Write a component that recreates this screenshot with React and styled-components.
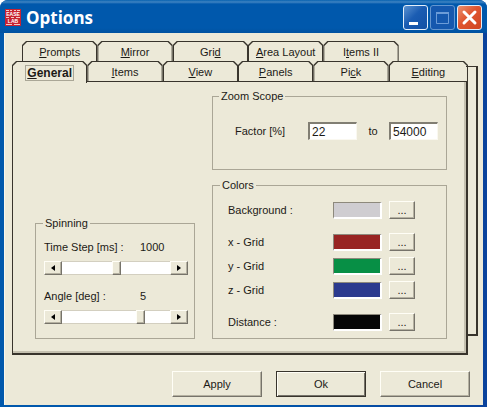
import React, { useState } from "react";
import styled, { createGlobalStyle, css } from "styled-components";

const face = "#ece9d8";
const ink = "#38342c";
const shade = "#aaa696";

const GlobalStyle = createGlobalStyle`
  * { box-sizing: border-box; }
  body { margin: 0; background: #fff; }
  button, input { font: inherit; color: inherit; }
`;

const Window = styled.main`
  display: flex;
  flex-direction: column;
  min-height: 100vh;
  padding: 0 4px 3px;
  border-radius: 8px 8px 0 0;
  background: linear-gradient(90deg, #0058ac 0, #0058ac 50%, #0a429c 100%);
  color: #1c1a16;
  font: 11px/14px "Liberation Sans", Arial, sans-serif;
  overflow: hidden;
`;

const TitleBar = styled.header`
  display: flex;
  align-items: center;
  gap: 5px;
  height: 33px;
  margin: 0 -4px;
  padding: 2px 5px 0;
  background: linear-gradient(#0862b0 0, #3f83c2 2px, #0058ac 4px, #0058ac 28px, #0052a0 100%);
`;

const Title = styled.h1`
  flex: 1;
  margin: 0;
  color: #fff;
  font: bold 17px/24px "Open Sans", "Noto Sans", sans-serif;
`;

const WindowButtons = styled.div`
  display: flex;
  gap: 2px;
`;

const WindowButton = styled.button`
  width: 25px;
  height: 25px;
  padding: 0;
  border: 1px solid ${(p) => (p.$faded ? "#6496d0" : "#e4effa")};
  border-radius: 3px;
  background: ${(p) =>
    p.$close
      ? "linear-gradient(135deg, #e9906f, #e0552f 45%, #cf4521)"
      : p.$faded
        ? "#1558ae"
        : "linear-gradient(135deg, #5c93d0, #1a5cb2 45%, #1251a5)"};
  svg { display: block; }
`;

const Body = styled.div`
  flex: 1;
  display: flex;
  flex-direction: column;
  padding: 8px 5px 8px 7px;
  border-left: 1px solid #f8f6ec;
  background: ${face};
`;

const TabRow = styled.div`
  position: relative;
  display: grid;
  grid-template-columns: repeat(5, 75fr) 79fr;
  height: 20px;
  margin: ${(p) => (p.$back ? "0 0 0 10px" : "0 10px 0 0")};
`;

const chamfer = "polygon(0 4px, 4px 0, calc(100% - 4px) 0, 100% 4px, 100% 100%, 0 100%)";

const Tab = styled.button`
  position: relative;
  height: 20px;
  padding: 1px 0 0;
  border: 0;
  background: ${ink};
  clip-path: ${chamfer};
  &::before {
    content: "";
    position: absolute;
    inset: 1px 1px 0;
    background: ${face};
    clip-path: ${chamfer};
  }
  ${(p) =>
    p.$selected &&
    css`
      z-index: 1;
      height: 22px;
      padding: 1px 0 0;
      font-size: 12px;
      font-weight: bold;
    `}
`;

const TabText = styled.span`
  position: relative;
  display: inline-block;
  padding: 0 1px;
  outline: ${(p) => (p.$focus ? "1px solid #aaa797" : "none")};
`;

const Sheets = styled.div`
  position: relative;
  flex: 1;
  display: flex;
  padding-right: 10px;
  &::before {
    content: "";
    position: absolute;
    inset: -15px 0 19px auto;
    width: 10px;
    border: 1px solid ${ink};
    border-width: 1px 2px 2px 0;
  }
`;

const Panel = styled.section`
  position: relative;
  flex: 1;
  display: grid;
  grid-template-columns: 160fr 233fr;
  column-gap: 17px;
  padding: 7px 19px 14px 22px;
  border: 1px solid ${ink};
  border-width: 1px 2px 2px 1px;
  background: ${face};
  box-shadow: inset -2px -2px 0 #c5c1b0;
`;

const Column = styled.div`
  display: flex;
  flex-direction: column;
  justify-content: flex-end;
  gap: 8px;
`;

const Group = styled.fieldset`
  min-width: 0;
  margin: 0;
  padding: ${(p) => p.$pad};
  border: 1px solid ${shade};
`;

const Legend = styled.legend`
  margin-left: ${(p) => p.$indent}px;
  padding: 0 2px;
`;

const ZoomRow = styled.div`
  display: flex;
  align-items: center;
`;

const ZoomLabel = styled.label`
  width: 73px;
`;

const To = styled.label`
  width: 32px;
  text-align: center;
`;

const NumberBox = styled.input`
  width: 49px;
  height: 18px;
  padding: 0 2px;
  border: 1px solid;
  border-width: 2px 1px 1px 2px;
  border-color: #817e73 #faf8f0 #faf8f0 #817e73;
  border-radius: 0;
  background: #fff;
  font-size: 12px;
  outline: 0;
`;

const ColorRow = styled.div`
  display: grid;
  grid-template-columns: 1fr 49px 26px;
  align-items: center;
  column-gap: 7px;
  height: 18px;
  margin-bottom: ${(p) => (p.$spaced ? 14 : 6)}px;
  &:last-child { margin-bottom: 0; }
`;

const Swatch = styled.span`
  height: 17px;
  border: 1px solid;
  border-color: #8d897c #fff #fff #8d897c;
  border-bottom-width: 2px;
  border-right-width: 2px;
  background: ${(p) => p.$color};
`;

const raised = css`
  border: 1px solid;
  border-color: #fffef6 #76736a #76736a #fffef6;
  border-radius: 0;
  background: ${face};
  box-shadow: inset -1px -1px 0 #b5b1a1;
`;

const PickButton = styled.button`
  ${raised}
  height: 18px;
  padding: 0;
  line-height: 14px;
`;

const SliderHead = styled.div`
  display: grid;
  grid-template-columns: 96px 1fr;
  margin-bottom: 7px;
`;

const SliderBar = styled.div`
  display: grid;
  grid-template-columns: 18px 1fr 18px;
  height: 14px;
  margin-bottom: ${(p) => (p.$spaced ? 14 : 0)}px;
`;

const Arrow = styled.button`
  ${raised}
  display: grid;
  place-items: center;
  padding: 0;
`;

const Range = styled.input`
  appearance: none;
  width: 100%;
  min-width: 0;
  height: 14px;
  margin: 0;
  border-top: 1px solid #d3cfc0;
  border-bottom: 1px solid #d3cfc0;
  background: #fff;
  &::-webkit-slider-thumb {
    ${raised}
    appearance: none;
    width: 9px;
    height: 14px;
  }
`;

const Footer = styled.footer`
  display: flex;
  justify-content: flex-end;
  gap: 14px;
  padding: 16px 8px 0;
`;

const ActionButton = styled.button`
  ${raised}
  width: 90px;
  height: 26px;
  padding: 0;
  outline: ${(p) => (p.$primary ? `1px solid ${ink}` : "none")};
  outline-offset: -1px;
  ${(p) => p.$primary && "box-shadow: inset 1px 1px 0 #fffef6, inset -1px -1px 0 #76736a;"}
`;

const backTabs = [["", "P", "rompts"], ["", "M", "irror"], ["Gri", "d", ""], ["", "A", "rea Layout"], ["I", "t", "ems II"]];
const frontTabs = [["", "G", "eneral"], ["", "I", "tems"], ["", "V", "iew"], ["", "P", "anels"], ["Pi", "c", "k"], ["", "E", "diting"]];
const colors = [
  { label: "Background :", color: "#cfcdd1", spaced: true },
  { label: "x - Grid", color: "#982422" },
  { label: "y - Grid", color: "#078f45" },
  { label: "z - Grid", color: "#2b3a8e", spaced: true },
  { label: "Distance :", color: "#050505" },
];

function Tabs({ items, back }) {
  return (
    <TabRow $back={back} role="tablist">
      {items.map(([before, key, after]) => {
        const selected = after === "eneral";
        return (
          <Tab key={before + key + after} role="tab" aria-selected={selected} $selected={selected}>
            <TabText $focus={selected}>{before}<u>{key}</u>{after}</TabText>
          </Tab>
        );
      })}
    </TabRow>
  );
}

function Slider({ id, label, shown, start, spaced }) {
  const [value, setValue] = useState(start);
  return (
    <>
      <SliderHead>
        <label htmlFor={id}>{label}</label>
        <output htmlFor={id}>{shown}</output>
      </SliderHead>
      <SliderBar $spaced={spaced}>
        <Arrow aria-label={`Decrease ${label}`} onClick={() => setValue(Math.max(0, value - 1))}>
          <svg width="4" height="6"><path d="M4 0v6L0 3z" /></svg>
        </Arrow>
        <Range id={id} type="range" min="0" max="100" value={value} onChange={(e) => setValue(+e.target.value)} />
        <Arrow aria-label={`Increase ${label}`} onClick={() => setValue(Math.min(100, value + 1))}>
          <svg width="4" height="6"><path d="M0 0v6l4-3z" /></svg>
        </Arrow>
      </SliderBar>
    </>
  );
}

function Logo() {
  return (
    <svg width="16" height="17" viewBox="0 0 16 17" aria-hidden="true">
      <rect width="16" height="17" fill="#c92331" />
      <g fill="#fff" fontFamily="Liberation Sans" fontWeight="bold" fontSize="5" textAnchor="middle">
        <text x="8" y="7">EASE</text>
        <text x="8" y="14">LAB</text>
      </g>
      <path d="M1 1.5h3M5 1.5h2M9 1.5h2M12 1.5h3M1 8.5h3M6 8.5h3M11 8.5h4M1 15.5h6M9 15.5h6" stroke="#f3c9c7" />
    </svg>
  );
}

export default function App() {
  return (
    <>
      <GlobalStyle />
      <Window>
        <TitleBar>
          <Logo />
          <Title>Options</Title>
          <WindowButtons>
            <WindowButton aria-label="Minimize">
              <svg width="23" height="23"><path d="M5 17.5h9" stroke="#fff" strokeWidth="3" /></svg>
            </WindowButton>
            <WindowButton aria-label="Maximize" $faded>
              <svg width="23" height="23" fill="none" stroke="#6c9cd8"><path d="M5.5 6.5h12v11h-12z" /><path d="M5 7h13" strokeWidth="2" /></svg>
            </WindowButton>
            <WindowButton aria-label="Close" $close>
              <svg width="23" height="23"><path d="M6 6l11 11M17 6L6 17" stroke="#fff" strokeWidth="3" strokeLinecap="round" /></svg>
            </WindowButton>
          </WindowButtons>
        </TitleBar>
        <Body>
          <Tabs items={backTabs} back />
          <Tabs items={frontTabs} />
          <Sheets>
            <Panel role="tabpanel" aria-label="General">
              <Column>
                <Group $pad="10px 6px 14px 8px">
                  <Legend $indent={-1}>Spinning</Legend>
                  <Slider id="time" label="Time Step [ms] :" shown="1000" start={51} spaced />
                  <Slider id="angle" label="Angle [deg] :" shown="5" start={75} />
                </Group>
              </Column>
              <Column>
                <Group $pad="19px 8px 29px 22px">
                  <Legend $indent={-16}>Zoom Scope</Legend>
                  <ZoomRow>
                    <ZoomLabel htmlFor="from">Factor [%]</ZoomLabel>
                    <NumberBox id="from" defaultValue="22" />
                    <To htmlFor="upto">to</To>
                    <NumberBox id="upto" defaultValue="54000" />
                  </ZoomRow>
                </Group>
                <Group $pad="9px 31px 7px 15px">
                  <Legend $indent={-8}>Colors</Legend>
                  {colors.map(({ label, color, spaced }) => (
                    <ColorRow key={label} $spaced={spaced}>
                      <span>{label}</span>
                      <Swatch $color={color} />
                      <PickButton aria-label={`Choose ${label}`}>...</PickButton>
                    </ColorRow>
                  ))}
                </Group>
              </Column>
            </Panel>
          </Sheets>
          <Footer>
            <ActionButton>Apply</ActionButton>
            <ActionButton $primary>Ok</ActionButton>
            <ActionButton>Cancel</ActionButton>
          </Footer>
        </Body>
      </Window>
    </>
  );
}
